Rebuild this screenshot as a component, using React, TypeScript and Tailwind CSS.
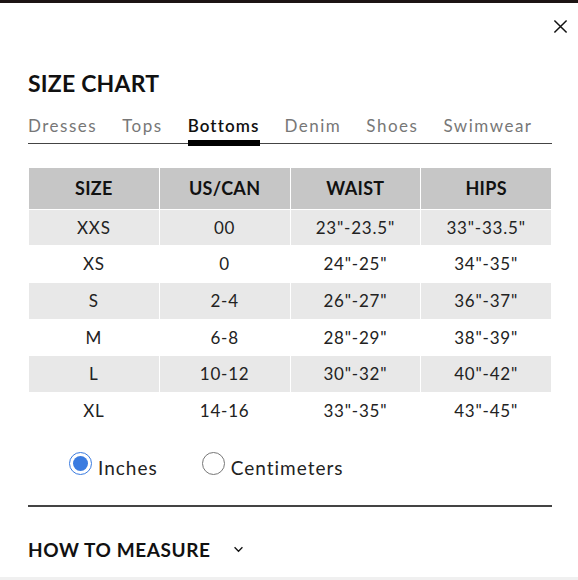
import { useState } from 'react'

const tabs = ['Dresses', 'Tops', 'Bottoms', 'Denim', 'Shoes', 'Swimwear']

const rows = [
  ['XXS', '00', '23"-23.5"', '33"-33.5"'],
  ['XS', '0', '24"-25"', '34"-35"'],
  ['S', '2-4', '26"-27"', '36"-37"'],
  ['M', '6-8', '28"-29"', '38"-39"'],
  ['L', '10-12', '30"-32"', '40"-42"'],
  ['XL', '14-16', '33"-35"', '43"-45"'],
]

export default function App() {
  const [unit, setUnit] = useState<'in' | 'cm'>('in')

  return (
    <div className="w-[578px] h-[580px] bg-white overflow-hidden flex flex-col font-['Lato',sans-serif] text-[#111]">
      {/* top edge of page behind modal */}
      <div className="h-[3px] bg-[#1c1414] shrink-0" />

      {/* close button */}
      <div className="flex justify-end pr-[8px] pt-[13px]">
        <button className="w-[20px] h-[20px] flex items-center justify-center" aria-label="Close">
          <svg className="w-[15px] h-[15px]" viewBox="0 0 16 16" fill="none" stroke="#111" strokeWidth="1.6">
            <path d="M1.5 1.5l13 13M14.5 1.5l-13 13" />
          </svg>
        </button>
      </div>

      <div className="flex flex-col pl-[28px] pr-[26px]">
        <h2 className="mt-[33px] text-[23px] leading-[28px] font-bold tracking-[0.2px]">SIZE CHART</h2>

        {/* Tabs */}
        <div className="mt-[17px] flex gap-[25px] border-b-[1.5px] border-[#444] h-[30px]">
          {tabs.map(t => (
            <div key={t} className="relative">
              <span
                className={`text-[17px] leading-[22px] ${
                  t === 'Bottoms' ? 'text-[#111] font-semibold tracking-[1.1px]' : 'text-[#777] tracking-[1.5px]'
                }`}
              >
                {t}
              </span>
              {t === 'Bottoms' && (
                <div className="absolute left-0 right-[-1px] top-[26px] h-[6px] bg-black" />
              )}
            </div>
          ))}
        </div>

        {/* Table */}
        <table className="mt-[24px] w-full border-collapse table-fixed text-center">
          <thead>
            <tr className="bg-[#c6c6c6] h-[41px]">
              {['SIZE', 'US/CAN', 'WAIST', 'HIPS'].map(h => (
                <th key={h} className="border-[1.5px] border-white border-t-0 text-[18px] font-bold text-[#111] tracking-[0.3px]">
                  {h}
                </th>
              ))}
            </tr>
          </thead>
          <tbody>
            {rows.map((r, i) => (
              <tr key={r[0]} className={`h-[36.7px] ${i % 2 === 0 ? 'bg-[#e8e8e8]' : 'bg-white'}`}>
                {r.map((c, j) => (
                  <td key={j} className="border-[1.5px] border-white text-[17px] text-[#222] tracking-[0.8px]">
                    {c}
                  </td>
                ))}
              </tr>
            ))}
          </tbody>
        </table>

        {/* Units */}
        <div className="mt-[16px] pl-[41px] flex items-center gap-[44px]">
          <label className="flex items-center gap-[6px] cursor-pointer" onClick={() => setUnit('in')}>
            <span className={`w-[23px] h-[23px] rounded-full flex items-center justify-center border-[1.5px] ${unit === 'in' ? 'border-[#3a7be0]' : 'border-[#777]'}`}>
              {unit === 'in' && <span className="w-[15px] h-[15px] rounded-full bg-[#3a7be0]" />}
            </span>
            <span className="text-[19px] tracking-[1px] text-[#222] mt-[8px]">Inches</span>
          </label>
          <label className="flex items-center gap-[6px] cursor-pointer" onClick={() => setUnit('cm')}>
            <span className={`w-[23px] h-[23px] rounded-full flex items-center justify-center border-[1.5px] ${unit === 'cm' ? 'border-[#3a7be0]' : 'border-[#777]'}`}>
              {unit === 'cm' && <span className="w-[15px] h-[15px] rounded-full bg-[#3a7be0]" />}
            </span>
            <span className="text-[19px] tracking-[1px] text-[#222] mt-[8px]">Centimeters</span>
          </label>
        </div>

        <div className="mt-[23px] h-[1.5px] bg-[#444]" />

        {/* How to measure */}
        <div className="mt-[31px] flex items-center gap-[22px]">
          <span className="text-[19px] leading-[24px] font-bold tracking-[0.6px]">HOW TO MEASURE</span>
          <svg className="w-[11px] h-[7px]" viewBox="0 0 12 8" fill="none" stroke="#111" strokeWidth="1.5">
            <path d="M1.5 1.5l4.5 4.5 4.5-4.5" />
          </svg>
        </div>
      </div>

      <div className="mt-auto h-[3px] bg-[#f0f0f0]" />
    </div>
  )
}
